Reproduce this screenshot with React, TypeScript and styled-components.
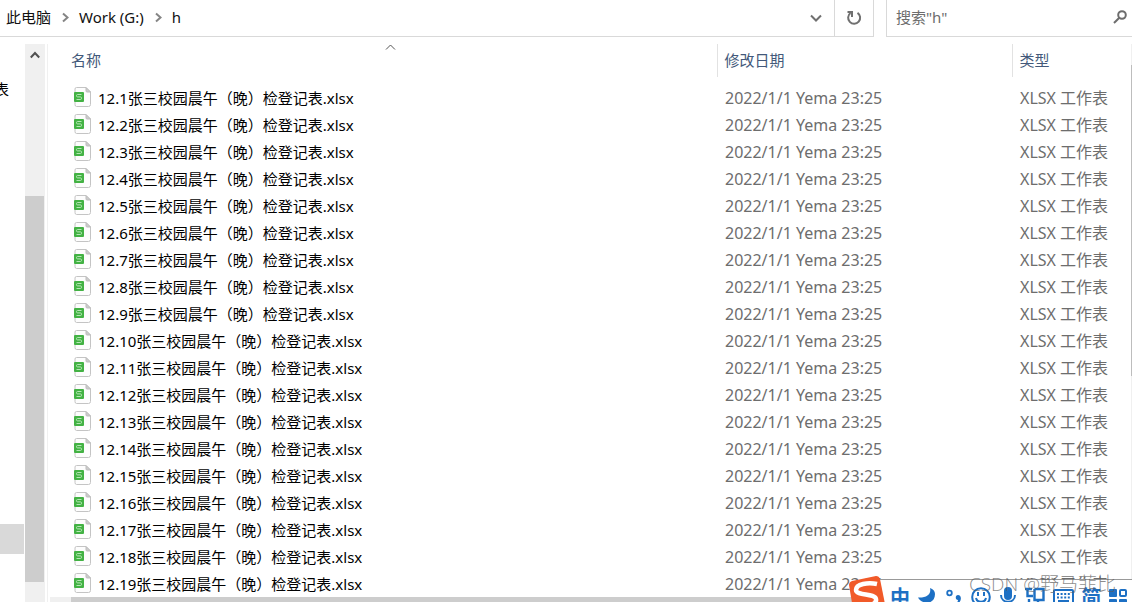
import React from 'react';
import styled, { createGlobalStyle } from 'styled-components';

const GlobalStyle = createGlobalStyle`
  * { box-sizing: border-box; }
  body {
    margin: 0;
    background: #fff;
    color: #000;
    font: 15px/20px "Noto Sans", "Noto Sans CJK SC", sans-serif;
  }
  button, input { font: inherit; color: inherit; }
`;

const Window = styled.div`
  position: relative;
  display: flex;
  flex-direction: column;
  height: 100vh;
  overflow: hidden;
`;

const TopBar = styled.header`
  display: flex;
  gap: 12px;
  height: 37px;
  flex: none;
`;

const AddressBar = styled.nav`
  display: flex;
  flex: 1;
  border: solid #d9d9d9;
  border-width: 0 1px 1px 0;
`;

const Crumbs = styled.ol`
  display: flex;
  align-items: center;
  flex: 1;
  gap: 11px;
  margin: 0;
  padding: 0 0 2px 6px;
  list-style: none;
`;

const Crumb = styled.li`
  display: flex;
  align-items: center;
  gap: 10px;
`;

const CrumbLink = styled.a`
  color: #111;
  text-decoration: none;
`;

const BarButton = styled.button<{ $divided?: boolean }>`
  display: flex;
  align-items: center;
  justify-content: center;
  width: ${(p) => (p.$divided ? 39 : 37)}px;
  padding: 0;
  border: 0;
  border-left: ${(p) => (p.$divided ? '1px solid #d9d9d9' : '0')};
  background: none;
  color: #707070;
`;

const SearchBox = styled.label`
  display: flex;
  align-items: center;
  width: 246px;
  padding: 0 5px 2px 9px;
  border: solid #d9d9d9;
  border-width: 0 0 1px 1px;
  color: #6d6d6d;
`;

const SearchInput = styled.input`
  flex: 1;
  min-width: 0;
  padding: 0;
  border: 0;
  outline: 0;
  background: none;
  &::placeholder { color: #6d6d6d; opacity: 1; }
`;

const Body = styled.div`
  display: flex;
  flex: 1;
  min-height: 0;
  padding-top: 7px;
`;

const Sidebar = styled.aside`
  display: flex;
  flex-direction: column;
  justify-content: space-between;
  width: 25px;
  padding: 35px 0 48px;
  overflow: hidden;
`;

const TreeItem = styled.div`
  display: flex;
  justify-content: flex-end;
  width: 9px;
`;

const TreeSelection = styled.div`
  width: 24px;
  height: 30px;
  background: #d9d9d9;
`;

const ScrollTrack = styled.div`
  display: flex;
  flex-direction: column;
  width: 20px;
  padding: 0 1px 20px 0;
  background: #f0f0f0;
`;

const ScrollUp = styled.button`
  display: flex;
  justify-content: center;
  height: 152px;
  padding: 7px 0 0;
  border: 0;
  background: none;
  color: #505050;
`;

const ScrollThumb = styled.div`
  flex: 1;
  background: #cdcdcd;
`;

const ListPane = styled.main`
  display: flex;
  flex-direction: column;
  flex: 1;
  min-width: 0;
  margin-left: 2px;
  border-left: 1px solid #f0f0f0;
`;

const ListArea = styled.div`
  flex: 1;
  min-height: 0;
  overflow: hidden;
`;

const FileTable = styled.table`
  width: 100%;
  border-collapse: collapse;
  table-layout: fixed;
`;

const HeadCell = styled.th<{ $width?: number }>`
  position: relative;
  width: ${(p) => (p.$width ? `${p.$width}px` : 'auto')};
  height: 33px;
  padding: 0 0 2px ${(p) => (p.$width ? 7 : 23)}px;
  border-left: ${(p) => (p.$width ? '1px solid #e2e2e2' : '0')};
  color: #43597a;
  font-weight: 400;
  text-align: left;
`;

const SortMark = styled.svg`
  position: absolute;
  top: 0;
  left: 17px;
  right: 0;
  margin: 0 auto;
`;

const Spacer = styled.tbody`
  td { height: 8px; padding: 0; }
`;

const Cell = styled.td`
  height: 27px;
  padding: 0 0 2px 8px;
  color: #6d6d6d;
  font-size: 16px;
  white-space: nowrap;
`;

const NameCell = styled(Cell)`
  padding-left: 26px;
  color: #000;
  font-size: 15px;
`;

const FileName = styled.div`
  display: flex;
  align-items: center;
  gap: 7px;
  svg { margin-bottom: 2px; }
`;

const HorizontalTrack = styled.div`
  flex: none;
  height: 5px;
  margin-left: 2px;
  padding-left: 21px;
  background: #f0f0f0;
`;

const HorizontalThumb = styled.div`
  height: 100%;
  background: #cdcdcd;
`;

const EdgeTrack = styled.div`
  width: 1px;
  padding-top: 21px;
  background: #f0f0f0;
`;

const EdgeThumb = styled.div`
  height: 58%;
  background: #bdbdbd;
`;

const ImeBar = styled.div`
  position: absolute;
  right: 0;
  bottom: -8px;
  display: flex;
  align-items: flex-end;
  width: 264px;
  height: 31px;
  padding: 0 5px 0 22px;
  border-top: 1px solid #999;
  background: #fff;
  color: #1d70c4;
`;

const ImeLogo = styled.svg`
  position: absolute;
  left: -20px;
  top: -5px;
`;

const ImeItems = styled.div`
  display: flex;
  flex: 1;
  align-items: center;
  justify-content: space-between;
  height: 26px;
`;

const ImeButton = styled.button`
  display: flex;
  align-items: center;
  justify-content: center;
  height: 20px;
  padding: 0;
  border: 0;
  background: none;
  font: 700 20px/20px "Noto Sans CJK SC", sans-serif;
`;

const Watermark = styled.div`
  position: absolute;
  right: 16px;
  bottom: 6px;
  color: rgba(90, 90, 90, 0.7);
  font: 300 19px/24px "Open Sans", "Noto Sans CJK SC", sans-serif;
  white-space: nowrap;
`;

const CrumbArrow = () => (
  <svg width="7" height="12" viewBox="0 0 7 12" fill="none" stroke="#858585" strokeWidth="2" aria-hidden="true">
    <path d="M1 2.500 5.500 6.500 1 10.500" />
  </svg>
);

const SheetIcon = () => (
  <svg width="17" height="20" viewBox="0 0 17 20" aria-hidden="true">
    <path d="M2.500.5h9.500l4.500 4.500v12.500q0 2-2 2h-12q-1.500 0-1.500-2V2q0-1.500 1.500-1.500z" fill="#fdfdfd" stroke="#c4c4c4" />
    <path d="M12 .5V4q0 1 1 1h3.500z" fill="#ccc" stroke="#bdbdbd" />
    <rect y="5" width="10" height="10" rx="1" fill="#43b244" />
    <path d="M7.500 7.500H3.500q-1 0-1 1.200t1 1.200h3q1 0 1 1.300t-1 1.300H2.500" fill="none" stroke="#b5e8b5" />
  </svg>
);

const crumbs = ['此电脑', 'Work (G:)', 'h'];
const files = Array.from({ length: 19 }, (_, i) => `12.${i + 1}张三校园晨午（晚）检登记表.xlsx`);

const imeTools = [
  { label: '中英文', art: '中' },
  {
    label: '半角',
    art: (
      <svg width="18" height="18" viewBox="0 0 18 18" fill="currentColor">
        <path d="M12 0c1.500 6-3 10-12 9.500 4 7.500 17 7.500 17-3.500 0-3-2-5-5-6z" />
      </svg>
    ),
  },
  {
    label: '标点',
    art: (
      <svg width="20" height="18" viewBox="0 0 20 18" fill="currentColor">
        <circle cx="5.500" cy="5" r="2.300" fill="none" stroke="currentColor" strokeWidth="1.800" />
        <path d="M14 7c4 0 4 7-1 9l-1-1q2-1 2-3c-3 0-3-5 0-5z" />
      </svg>
    ),
  },
  {
    label: '表情',
    art: (
      <svg width="20" height="20" viewBox="0 0 20 20" fill="none" stroke="currentColor" strokeWidth="2">
        <circle cx="10" cy="10" r="8.800" />
        <path d="M7 5v4M13 5v4M5 11c1 5 9 5 10 0" />
      </svg>
    ),
  },
  {
    label: '语音',
    art: (
      <svg width="18" height="20" viewBox="0 0 18 20" fill="none" stroke="currentColor" strokeWidth="2">
        <rect x="5" y="0" width="8" height="13" rx="4" fill="currentColor" stroke="none" />
        <path d="M2 8c0 9 14 9 14 0M9 15v4" />
      </svg>
    ),
  },
  {
    label: '工具',
    art: (
      <svg width="20" height="20" viewBox="0 0 20 20" fill="none" stroke="currentColor" strokeWidth="2.400">
        <path d="M0 2h7M2.500 2v7H8M9.500 2h9v11h-9V2M4 12v6h9v-5" />
      </svg>
    ),
  },
  {
    label: '键盘',
    art: (
      <svg width="21" height="20" viewBox="0 0 21 20" fill="none" stroke="currentColor" strokeWidth="2">
        <rect x="1" y="3" width="19" height="14" rx="1" />
        <path d="M4 7h13M4 10.500h13" strokeDasharray="2 1.600" />
        <path d="M5 14h11" />
      </svg>
    ),
  },
  { label: '简繁', art: '简' },
  {
    label: '菜单',
    art: (
      <svg width="18" height="20" viewBox="0 0 18 20" fill="currentColor">
        <rect y="2" width="8" height="8" rx="1" />
        <rect x="11" y="3" width="6" height="6" rx="1" fill="none" stroke="currentColor" strokeWidth="2" />
        <rect y="12" width="8" height="8" rx="1" />
        <rect x="10" y="12" width="8" height="8" rx="1" />
      </svg>
    ),
  },
];

export default function App() {
  return (
    <Window>
      <GlobalStyle />
      <TopBar>
        <AddressBar aria-label="地址">
          <Crumbs>
            {crumbs.map((name, i) => (
              <Crumb key={name}>
                {i > 0 && <CrumbArrow />}
                <CrumbLink href="#">{name}</CrumbLink>
              </Crumb>
            ))}
          </Crumbs>
          <BarButton aria-label="历史记录">
            <svg width="12" height="8" viewBox="0 0 12 8" fill="none" stroke="currentColor" strokeWidth="2">
              <path d="M1 1.500 6 6.500 11 1.500" />
            </svg>
          </BarButton>
          <BarButton $divided aria-label="刷新">
            <svg width="16" height="16" viewBox="0 0 16 16" fill="none" stroke="currentColor" strokeWidth="2">
              <path d="M11.500 2.800A6 6 0 1 1 4.500 3M1.500 2H6v5" />
            </svg>
          </BarButton>
        </AddressBar>
        <SearchBox>
          <SearchInput type="text" aria-label="搜索" placeholder={'搜索"h"'} />
          <svg width="14" height="14" viewBox="0 0 14 14" fill="none" stroke="currentColor" strokeWidth="2" aria-hidden="true">
            <circle cx="9" cy="5" r="3.800" />
            <path d="M6.300 7.700 1 13" />
          </svg>
        </SearchBox>
      </TopBar>
      <Body>
        <Sidebar>
          <TreeItem>表</TreeItem>
          <TreeSelection />
        </Sidebar>
        <ScrollTrack>
          <ScrollUp aria-label="向上滚动">
            <svg width="10" height="8" viewBox="0 0 10 8" fill="none" stroke="currentColor" strokeWidth="2">
              <path d="M.8 6.500 5 2 9.200 6.500" />
            </svg>
          </ScrollUp>
          <ScrollThumb />
        </ScrollTrack>
        <ListPane>
          <ListArea>
            <FileTable>
              <thead>
                <tr>
                  <HeadCell>
                    名称
                    <SortMark width="11" height="7" viewBox="0 0 11 7" fill="none" stroke="#555">
                      <path d="M1 5.500 5.500 1 10 5.500" />
                    </SortMark>
                  </HeadCell>
                  <HeadCell $width={295}>修改日期</HeadCell>
                  <HeadCell $width={119}>类型</HeadCell>
                </tr>
              </thead>
              <Spacer>
                <tr>
                  <td colSpan={3} />
                </tr>
              </Spacer>
              <tbody>
                {files.map((name) => (
                  <tr key={name}>
                    <NameCell>
                      <FileName>
                        <SheetIcon />
                        {name}
                      </FileName>
                    </NameCell>
                    <Cell>2022/1/1 Yema 23:25</Cell>
                    <Cell>XLSX 工作表</Cell>
                  </tr>
                ))}
              </tbody>
            </FileTable>
          </ListArea>
          <HorizontalTrack>
            <HorizontalThumb />
          </HorizontalTrack>
        </ListPane>
        <EdgeTrack>
          <EdgeThumb />
        </EdgeTrack>
      </Body>
      <ImeBar>
        <ImeLogo width="38" height="38" viewBox="0 0 38 38">
          <path d="M4 6 28 1q3 0 4 3l5 25q0 3-3 4L9 37q-3 0-4-3L1 10q0-3 3-4z" fill="#f15a29" />
          <path d="M29 9C20 7 8 9 8 15s19 3 20 9-9 8-20 6" fill="none" stroke="#fff" strokeWidth="4.500" />
        </ImeLogo>
        <ImeItems>
          {imeTools.map((tool) => (
            <ImeButton key={tool.label} aria-label={tool.label}>
              {tool.art}
            </ImeButton>
          ))}
        </ImeItems>
      </ImeBar>
      <Watermark>CSDN @野马菲比</Watermark>
    </Window>
  );
}
